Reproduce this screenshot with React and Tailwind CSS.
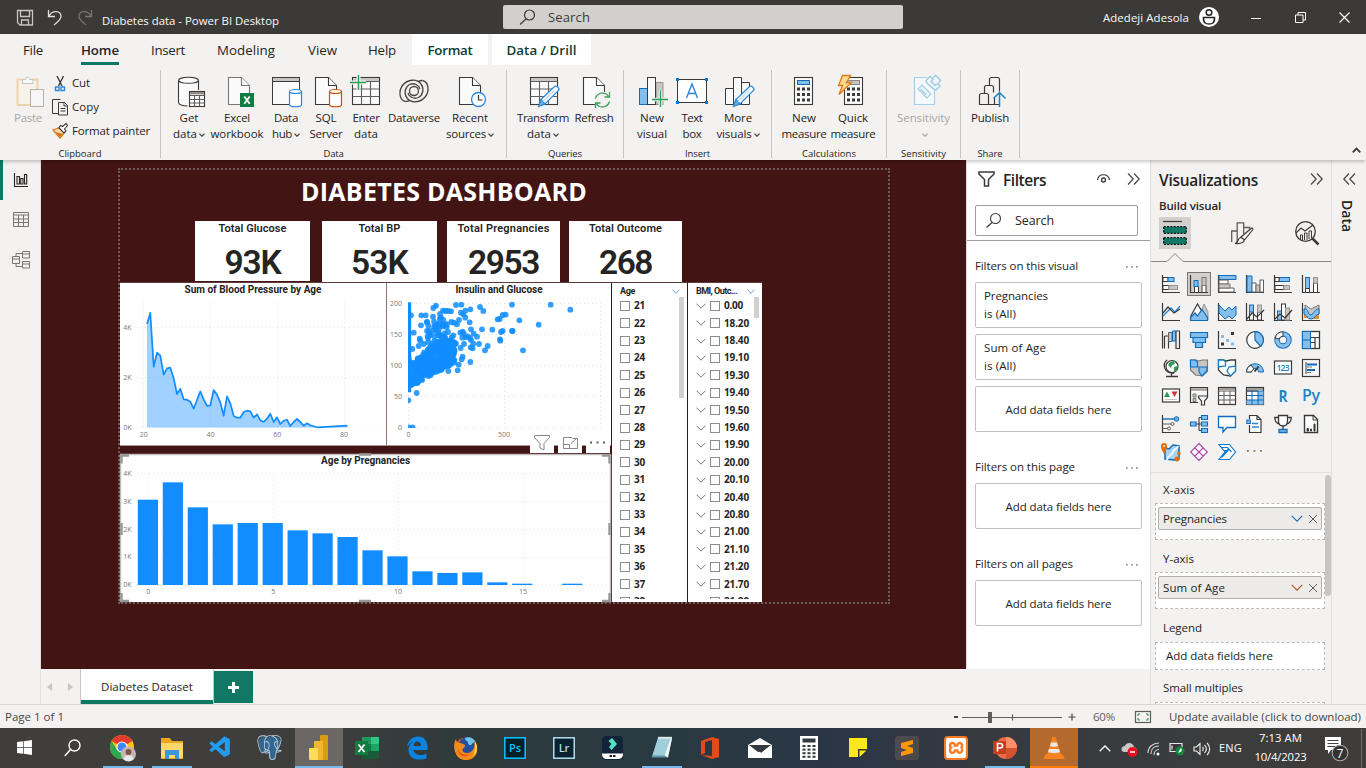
import { useLayoutEffect, useRef, useState } from "react";
import { FaWindows } from "react-icons/fa";
import { SiPostgresql, SiXampp } from "react-icons/si";
import { VscVscode } from "react-icons/vsc";

/* Text run whose tracking is adjusted so that it spans w pixels. */
function T({ w, className = "", children }) {
  const ref = useRef(null);
  const [ls, setLs] = useState(0);
  useLayoutEffect(() => {
    const el = ref.current;
    const natural = el.getBoundingClientRect().width;
    const n = el.textContent.length;
    if (w && n) setLs((w - natural) / n);
  }, []);
  return (
    <span ref={ref} className={"inline-block whitespace-nowrap " + className} style={{ letterSpacing: ls + "px" }}>
      {children}
    </span>
  );
}

function Ic({ x = 0, y = 0, w = 32, h = 32, className = "", children }) {
  return (
    <svg width={w} height={h} viewBox={`${x} ${y} ${w} ${h}`} fill="none" className={"block shrink-0 overflow-visible " + className}>
      {children}
    </svg>
  );
}

const K = "#3b3a39";
const B = "#0f6cbd";
const LB = "#83beec";
const G = "#c8c6c4";

const Doc = ({ x, c = K }) => (
  <g stroke={c} fill="#fafafa" strokeWidth="1.1">
    <path d={`M${x} 77.5h13l8 8v19h-21z`} />
    <path d={`M${x + 13} 77.5v8h8`} />
  </g>
);
const Cyl = ({ x, c }) => (
  <g stroke={c} fill="#fff" strokeWidth="1.2">
    <path d={`M${x} 91.5v13c0 3 12 3 12 0v-13`} />
    <ellipse cx={x + 6} cy="91.5" rx="6" ry="2" />
  </g>
);
const Pencil = ({ x }) => (
  <g strokeWidth="1.2" transform={`translate(${x} 0)`}>
    <path d="M1.5 105.5l1.5-6L16.500 86.500c2-1.500 5.500 1.500 4 4L7 104z" fill="#f3f9fd" stroke="#2b88d8" />
    <path d="M0.500 106.500l2.500-7 4 4.500z" fill="#69afe5" stroke="#2b88d8" />
    <path d="M5 101.500l11-11" stroke="#c7e0f4" />
  </g>
);
const Calc = ({ x, d = LB, ds = B }) => (
  <g>
    <rect x={x} y="77.5" width="18" height="27" fill="#fafafa" stroke={K} strokeWidth="1.1" />
    <rect x={x + 3} y="80.5" width="12" height="4" fill={d} stroke={ds} />
    {[0, 1, 2].map((r) => [0, 1, 2].map((k) => <rect key={r + "-" + k} x={x + 2.500 + k * 5} y={87.500 + r * 5.500} width="3" height="3" fill={K} />))}
  </g>
);
const Grid = ({ x }) => (
  <g stroke={K} strokeWidth="1.1">
    <rect x={x} y="77.5" width="27" height="27" fill="#fafafa" />
    <rect x={x + 0.5} y="78" width="26" height="3.500" fill={G} stroke="none" />
    <path d={`M${x} 81.500h27M${x} 89h27M${x} 96.500h27M${x + 9} 81.500v23M${x + 18} 81.500v23`} stroke="#605e5c" />
  </g>
);

const icons = {
  paste: (
    <g opacity=".75">
      <path d="M23 79.500h-5.500v25.500h14M32 79.500h5.500V89" fill="none" stroke="#edc894" strokeWidth="2" />
      <path d="M19 81h17v8h-6v15H19z" fill="#fbf3e6" />
      <path d="M22.500 83.500v-4h3c0-3 4.500-3 4.500 0h3v4z" fill="#fafafa" stroke="#b3b0ad" />
      <rect x="30.500" y="89.500" width="13" height="17" fill="#f8f8f8" stroke="#a19f9d" />
    </g>
  ),
  get: (
    <g stroke={K} strokeWidth="1.1">
      <path d="M178.500 80.500v22c0 2 4 3.500 9 3.500h11V80.500" fill="#fafafa" stroke="none" />
      <path d="M178.500 80.500v22c0 2 4 3.500 9 3.500M198.500 80.500V90" />
      <ellipse cx="188.500" cy="80.300" rx="10" ry="3" fill="#fafafa" />
      <rect x="189.500" y="91.500" width="15" height="15" fill="#fff" />
      <path d="M190 93.200h14" stroke="#8a8886" strokeWidth="2.200" />
      <path d="M189.500 95.500h15M189.500 99.500h15M189.500 103h15M194.500 95.500v11M199.500 95.500v11" stroke="#605e5c" />
    </g>
  ),
  excel: (
    <g>
      <Doc x={228.5} c="#797775" />
      <rect x="240" y="93" width="14" height="14" fill="#107c41" />
      <path d="M244.300 96.500l5.400 7.200M249.700 96.500l-5.400 7.200" stroke="#fff" strokeWidth="1.900" />
    </g>
  ),
  hub: (
    <g>
      <rect x="272.5" y="77.5" width="27" height="27" fill="#fafafa" stroke={K} />
      <rect x="273" y="78" width="26" height="3" fill={G} />
      <path d="M272.500 81.500h27" stroke={K} />
      <Cyl x={289.5} c="#2b88d8" />
    </g>
  ),
  sql: (
    <g>
      <Doc x={315.5} />
      <Cyl x={329.5} c="#ca5010" />
    </g>
  ),
  enter: (
    <g>
      <Grid x={352.5} />
      <path d="M350 82.500h16M358.500 75v15" stroke="#f3f2f1" strokeWidth="4" />
      <path d="M350 82.500h16M358.500 75v15" stroke="#23a04f" strokeWidth="1.400" />
    </g>
  ),
  dv: (
    <g stroke="#484644" strokeWidth="1.300" fill="none">
      <path d="M405.500 101.500C399 100 398.500 91 402.500 85.500c5-6.500 14.500-7 18.500-1.500 3.500 4.500 2 11-2.500 13.500-4.500 2-9.500-.5-10.500-4.500" />
      <path d="M422.500 80.500C429 82 429.500 91 425.500 96.500c-5 6.500-14.500 7-18.500 1.500-3.500-4.500-2-11 2.500-13.500 4.500-2 9.500.5 10.500 4.500" />
      <path d="M405.500 101.500c2 0 3.500-.5 4.500-1.300M422.500 80.500c-2 0-3.500.5-4.500 1.300" />
      <circle cx="414" cy="91" r="4.500" />
    </g>
  ),
  recent: (
    <g>
      <Doc x={459.5} />
      <circle cx="478.500" cy="99.500" r="7" fill="#f8fbfe" stroke="#2b88d8" strokeWidth="1.300" />
      <path d="M478.500 95v5h4" stroke={K} strokeWidth="1.200" />
    </g>
  ),
  transform: (
    <g>
      <Grid x={530.5} />
      <Pencil x={538} />
    </g>
  ),
  refresh: (
    <g>
      <Doc x={583.5} />
      <circle cx="602.500" cy="100" r="8.500" fill="#f3f2f1" />
      <path d="M595.500 98.500c1.500-6 10-7.500 13-2M609.500 101.500c-1.500 6-10 7.500-13 2M609.500 92v5h-5M595.500 108v-5h5" stroke="#3fa35b" strokeWidth="1.300" />
    </g>
  ),
  newvis: (
    <g>
      <rect x="656" y="82.500" width="7" height="22" fill={G} stroke="#979593" />
      <rect x="639.500" y="88.500" width="8" height="16" fill={LB} stroke={B} />
      <rect x="647.500" y="77.500" width="8" height="27" fill="#fafafa" stroke={K} />
      <path d="M652 99.500h16M660.500 91v16" stroke="#f3f2f1" strokeWidth="3.500" />
      <path d="M652 99.500h16M660.500 91v16" stroke="#23a04f" strokeWidth="1.300" />
    </g>
  ),
  textbox: (
    <g>
      <rect x="677.500" y="79.500" width="29" height="23" fill="#fff" stroke={K} />
      <path d="M676 78h3v3h-3zM705 78h3v3h-3zM676 101h3v3h-3zM705 101h3v3h-3z" fill="#0078d4" />
      <path d="M686.500 98l5.500-14 5.500 14M688.500 93.500h7" stroke="#2b88d8" strokeWidth="1.400" />
    </g>
  ),
  more: (
    <g>
      <path d="M725.500 88.500h8v16h-8zM741.500 82.500h8v22h-8zM733.500 77.500h8v27h-8z" fill="#fafafa" stroke={K} />
      <Pencil x={733} />
    </g>
  ),
  newm: <Calc x={794.5} />,
  quick: (
    <g>
      <Calc x={844.5} d={G} ds="#8a8886" />
      <path d="M842.500 75.500h8l-4 7h5l-12.500 12 3.500-9h-4z" fill="#fcd88e" stroke="#e07b16" strokeWidth="1.300" />
    </g>
  ),
  sens: (
    <g stroke="#a5cfe6" strokeWidth="1.200">
      <path d="M926 77.500h-12.500v27h20V90" fill="#f5f9fc" />
      <path d="M917 89l4-4 9 9-4 4zM919.500 89l5.500 5.500" fill="#eaf5fb" />
      <path d="M925 80.500l4-4 3 3-2 2 4 4 3-1.500 2 2-4 4c-2 0-10-7-10-9.500zM932 78l2.500-2.500 5 5-2.500 2.500" fill="#f3f9fc" strokeWidth="1.600" />
    </g>
  ),
  publish: (
    <g stroke={K} strokeWidth="1.200">
      <path d="M989.500 85.500v-6q0-2 2-2h6q2 0 2 2v12M984.500 93.500v-6q0-2 2-2h5q2 0 2 2v5M979.500 104.500v-9q0-2 2-2h5q2 0 2 2v9zM989 104.500h10M994.500 98v6.500" fill="none" />
      <path d="M999.500 107V92.500M993.500 98.500l6-6 6 6" stroke="#1f83c4" strokeWidth="1.500" />
    </g>
  ),
};

const Chev = ({ c = "#484644" }) => (
  <svg width="6" height="4" viewBox="0 0 6 4" fill="none" className="ml-[2px] mt-[2px] inline-block">
    <path d="M.4 .6L3 3.200 5.600 .6" stroke={c} strokeWidth="1.300" />
  </svg>
);

function Item({ w, c, icon, l1, w1, l2, w2, chev, dim }) {
  return (
    <div className={"flex shrink-0 flex-col items-center pt-[5px] text-[11.5px] leading-4 " + w + (dim ? " text-[#a8a6a4]" : "")}>
      <Ic x={c - 16} y={75}>{icons[icon]}</Ic>
      <T w={w1} className="mt-[3px]">{l1}</T>
      {(l2 || chev) && (
        <div className="flex min-h-4 items-center">
          {l2 && <T w={w2}>{l2}</T>}
          {chev && <Chev c={dim ? "#a8a6a4" : "#484644"} />}
        </div>
      )}
    </div>
  );
}

function Group({ w, pl = "", label, lw, children }) {
  return (
    <div className={"flex h-[88px] shrink-0 flex-col border-r border-[#c8c6c4] " + w}>
      <div className={"flex h-[77px] shrink-0 " + pl}>{children}</div>
      <div className="flex h-[14px] shrink-0 items-center justify-center text-[9.500px] leading-[14px]">
        <T w={lw}>{label}</T>
      </div>
    </div>
  );
}

function TitleBar() {
  return (
    <div className="flex h-[34px] shrink-0 items-center bg-[#3b3a39] text-[#fafafa]">
      <Ic x={17} y={10} w={16} h={16} className="ml-[17px] mt-[2px]">
        <path d="M17.500 10.500h15v14.500h-12.500l-2.500-2.500zM20.500 10.500v6h9v-6M21.500 25v-5h7v5" stroke="#c8c6c4" strokeWidth="1.300" />
      </Ic>
      <Ic x={48} y={10} w={14} h={16} className="ml-[15px] mt-[2px]">
        <path d="M48.500 10v6.500h6.500M49 16c3-6 12-6 12 .5 0 3-3 5-7 8.500" stroke="#e1dfdd" strokeWidth="1.300" />
      </Ic>
      <Ic x={78} y={10} w={14} h={16} className="ml-4 mt-[2px]">
        <path d="M91.500 10v6.500H85M91 16c-3-6-12-6-12 .5 0 3 3 5 7 8.500" stroke="#797775" strokeWidth="1.300" />
      </Ic>
      <div className="ml-[10px] w-[401px] pt-[7px] text-[11.400px] leading-4"><T w={177}>Diabetes data - Power BI Desktop</T></div>
      <div className="flex h-6 w-[400px] items-center rounded-[2px] bg-[#d2d0ce] text-[#3b3a39]">
        <Ic w={17} h={16} className="ml-4">
          <circle cx="10.500" cy="6" r="5" stroke={K} strokeWidth="1.200" />
          <path d="M7 10L1 15.500" stroke={K} strokeWidth="1.200" />
        </Ic>
        <T w={42} className="ml-3 pt-px text-[13px]">Search</T>
      </div>
      <div className="ml-[200px] pt-px text-[11.400px]"><T w={86}>Adedeji Adesola</T></div>
      <Ic w={20} h={20} className="ml-[10px]">
        <circle cx="10" cy="10" r="10" fill="#fff" />
        <circle cx="10" cy="5.500" r="2.800" stroke="#222" strokeWidth="1.500" />
        <path d="M4.500 10.500h11c.5 6-3 6.500-5.500 6.500s-6-.5-5.500-6.500z" stroke="#222" strokeWidth="1.500" />
      </Ic>
      <div className="ml-8 mt-[2px] h-px w-[10px] bg-white" />
      <Ic w={11} h={11} className="ml-[34px] mt-px"><path d="M.5 3h7.500v7.500H.5zM3 3V.5h7.500v7.500H8" stroke="#fff" /></Ic>
      <Ic w={11} h={11} className="ml-[33px] mt-px"><path d="M.5 .5l10 10M10.500 .5l-10 10" stroke="#fff" strokeWidth="1.200" /></Ic>
    </div>
  );
}

function Tabs() {
  return (
    <div className="flex h-8 shrink-0 items-center text-[13.300px]">
      <T w={20} className="ml-[23px] pt-px">File</T>
      <div className="ml-[38px] flex h-full flex-col justify-end">
        <T w={38} className="mb-px font-semibold">Home</T>
        <div className="mb-px h-[3px] bg-[#117865]" />
      </div>
      <T w={34} className="ml-8 pt-px">Insert</T>
      <T w={58} className="ml-8 pt-px">Modeling</T>
      <T w={29} className="ml-[33px] pt-px">View</T>
      <T w={28} className="ml-[31px] pt-px">Help</T>
      <div className="mb-px ml-4 flex h-[31px] w-[76px] items-center justify-center bg-white pt-[2px] font-semibold text-[#0b3b32]"><T w={45}>Format</T></div>
      <div className="mb-px ml-1 flex h-[31px] w-[99px] items-center justify-center bg-white pt-[2px] font-semibold text-[#0b3b32]"><T w={70}>Data / Drill</T></div>
    </div>
  );
}

function Ribbon() {
  return (
    <div className="relative z-10 flex h-[94px] shrink-0 bg-[#f3f2f1] pt-1 shadow-[0_3px_3px_-1px_rgba(0,0,0,0.2)]">
      <Group w="w-[161px]" pl="pl-[8px]" label="Clipboard" lw={43}>
        <Item w="w-10" c={28} icon="paste" l1="Paste" w1={28} dim />
        <div className="ml-[4px] flex flex-col pt-px text-[11.500px] leading-6">
          <div className="flex items-center">
            <Ic x={52} y={74} w={17} h={17}>
              <path d="M57 75l5 10M63.500 75l-5 10" stroke={K} strokeWidth="1.400" />
              <path d="M55.500 86h3.500v3.500h-3.500zM61 86h3.500v3.500H61z" stroke="#2b88d8" strokeWidth="1.400" />
            </Ic>
            <T w={18} className="ml-[3px]">Cut</T>
          </div>
          <div className="flex items-center">
            <Ic x={52} y={98} w={17} h={17}>
              <path d="M58 112.500h-5.500v-14h8M58.500 101.500h6l3 3v9.500h-9z M64 101.500v3.500h3.500M60.500 107.500h5M60.500 110h5" stroke={K} />
            </Ic>
            <T w={27} className="ml-[3px]">Copy</T>
          </div>
          <div className="flex items-center">
            <Ic x={52} y={122} w={17} h={17}>
              <path d="M53 129l8-3 4 5-5 6z" fill="#fbd9a5" stroke="#d9730d" strokeWidth="1.200" />
              <path d="M55 131l5 5 3-3" fill="#d9730d" />
              <path d="M59 127l5 5 2-2-1.500-2 3-3.500-1.500-2-3.500 3-2-1z" fill="#fff" stroke={K} strokeWidth="1.100" />
            </Ic>
            <T w={78} className="ml-[3px]">Format painter</T>
          </div>
        </div>
      </Group>
      <Group w="w-[346px]" pl="pl-[9px]" label="Data" lw={20}>
        <Item w="w-[38px]" c={189} icon="get" l1="Get" w1={19} l2="data" w2={24} chev />
        <Item w="w-[58px]" c={237} icon="excel" l1="Excel" w1={26} l2="workbook" w2={53} />
        <Item w="w-10" c={286} icon="hub" l1="Data" w1={24} l2="hub" w2={20} chev />
        <Item w="w-10" c={326} icon="sql" l1="SQL" w1={21} l2="Server" w2={33} />
        <Item w="w-10" c={366} icon="enter" l1="Enter" w1={27} l2="data" w2={24} />
        <Item w="w-14" c={414} icon="dv" l1="Dataverse" w1={52} />
        <Item w="w-14" c={470} icon="recent" l1="Recent" w1={36} l2="sources" w2={40} chev />
      </Group>
      <Group w="w-[117px]" pl="pl-[7px]" label="Queries" lw={34}>
        <Item w="w-[58px]" c={543} icon="transform" l1="Transform" w1={52} l2="data" w2={24} chev />
        <Item w="w-11" c={594} icon="refresh" l1="Refresh" w1={39} />
      </Group>
      <Group w="w-[148px]" pl="pl-[8px]" label="Insert" lw={25}>
        <Item w="w-10" c={652} icon="newvis" l1="New" w1={24} l2="visual" w2={30} />
        <Item w="w-10" c={692} icon="textbox" l1="Text" w1={21} l2="box" w2={19} />
        <Item w="w-[52px]" c={738} icon="more" l1="More" w1={28} l2="visuals" w2={35} chev />
      </Group>
      <Group w="w-[115px]" pl="pl-[7px]" label="Calculations" lw={54}>
        <Item w="w-[50px]" c={804} icon="newm" l1="New" w1={24} l2="measure" w2={45} />
        <Item w="w-12" c={853} icon="quick" l1="Quick" w1={30} l2="measure" w2={45} />
      </Group>
      <Group w="w-[74px]" pl="justify-center" label="Sensitivity" lw={45}>
        <Item w="w-[60px]" c={923} icon="sens" l1="Sensitivity" w1={53} chev dim />
      </Group>
      <Group w="w-[59px]" pl="justify-center" label="Share" lw={25}>
        <Item w="w-[50px]" c={990} icon="publish" l1="Publish" w1={38} />
      </Group>
      <div className="flex grow items-end justify-end pb-[7px] pr-[5px]">
        <Ic w={9} h={6}><path d="M.7 5.300L4.500 1.500l3.800 3.800" stroke={K} strokeWidth="1.800" /></Ic>
      </div>
    </div>
  );
}

function Rail() {
  return (
    <div className="flex w-[41px] shrink-0 flex-col border-r border-[#e1dfdd]">
      <div className="flex h-10 items-center border-l-[3px] border-[#117865] pl-[11px]">
        <Ic x={14} y={173} w={14} h={15}>
          <path d="M14.500 173v13.500h13.500M17 176.500h2.500v7.500H17zM20.800 178.500h2.200v5.500h-2.200zM24.500 174.500h2.200v9.500h-2.200z" stroke="#252423" strokeWidth="1.100" />
        </Ic>
      </div>
      <div className="flex h-[39px] items-center pl-[13px]">
        <Ic w={16} h={15}><path d="M.5 .5h15v14H.5zM.5 3h15M.5 7h15M.5 10.500h15M5.500 3v11.500M10.500 3v11.500" stroke="#797775" /></Ic>
      </div>
      <div className="flex h-[41px] items-center pl-3">
        <Ic w={18} h={18}><path d="M.5 5.500h7v7h-7zM.5 8h7M10.500 .5h7v6.500h-7zM10.500 3h7M10.500 10.500h7v6.500h-7zM10.500 13h7M4 5.500V2.500h6.500M4 12.500v3h6.500" stroke="#797775" /></Ic>
      </div>
    </div>
  );
}

const areaY = [492, 458, 620, 578, 587, 644, 625, 623, 655, 702, 686, 718, 719, 725, 746, 720, 694, 718, 738, 736, 690, 704, 727, 767, 709, 730, 768, 773, 773, 756, 752, 754, 773, 763, 781, 786, 776, 761, 786, 772, 792, 782, 779, 798, 786, 777, 786, 797, 790, 796, 799, 802];
const areaPts = areaY.map((v, i) => [(441 + i * 10) / 3, 160 + v / 3]).concat([[347.5, 425.7]]);
const areaLine = areaPts.map((p) => p[0].toFixed(1) + "," + p[1].toFixed(1)).join(" ");

const Axis = ({ x, y, children, a = "middle", w }) => (
  <text x={x} y={y} textAnchor={a} fontSize="7" fill="#777" fontFamily="Open Sans" textLength={w}>{children}</text>
);

const gridStroke = { stroke: "#e3e3e3", strokeDasharray: "1 3", strokeWidth: 1 };

function AreaChart() {
  return (
    <Ic x={120} y={283} w={266} h={162}>
      <g {...gridStroke}><path d="M137 327.500h246M137 377.500h246M137 427.500h246M143.500 302v126M210.500 302v126M277.500 302v126M344.500 302v126" /></g>
      <polygon points={`147,427.600 ${areaLine} 347.500,427.600`} fill="#118dff" fillOpacity=".4" />
      <polyline points={areaLine} stroke="#118dff" strokeWidth="1.700" strokeLinejoin="round" />
      <Axis x={131.5} y={330} a="end">4K</Axis>
      <Axis x={131.5} y={380} a="end">2K</Axis>
      <Axis x={131.5} y={430} a="end">0K</Axis>
      {[20, 40, 60, 80].map((v, i) => <Axis key={v} x={143.7 + i * 66.8} y={437}>{v}</Axis>)}
    </Ic>
  );
}

/* Sparse points, three units per pixel, measured from (380, 270). */
const sparse = [[168, 107], [160, 114], [228, 105], [244, 104], [300, 111], [310, 123], [271, 118], [256, 122], [250, 133], [256, 143], [243, 128], [396, 104], [512, 104], [571, 119], [418, 151], [476, 164], [429, 241], [377, 134], [368, 135], [353, 148], [359, 147], [337, 179], [306, 178], [368, 183], [363, 186], [396, 183], [398, 183], [360, 208], [361, 212], [291, 200], [297, 222], [323, 228], [315, 241], [271, 276], [273, 178], [269, 157], [281, 191], [270, 204], [273, 210], [257, 202], [248, 185], [241, 188], [237, 150], [231, 163], [214, 156], [222, 158], [213, 124], [189, 122], [197, 123], [204, 123], [180, 132], [159, 140], [124, 136], [137, 136], [123, 166], [93, 136], [101, 188], [119, 206], [97, 237], [272, 232], [278, 235], [252, 222], [228, 221], [242, 234], [248, 260], [245, 268], [236, 284], [233, 301], [205, 303], [208, 286], [110, 369], [85, 391], [86, 472], [98, 472], [93, 346], [251, 190], [247, 203], [263, 199], [215, 202], [220, 196], [162, 155], [145, 167], [183, 142], [190, 150], [177, 160], [188, 165], [162, 171], [141, 183], [150, 192], [176, 187], [204, 186], [200, 172], [168, 180], [143, 199], [163, 198], [184, 200], [195, 210], [121, 212], [131, 222], [210, 212], [280, 221], [116, 228]];
const dense = (() => {
  const out = [];
  let s = 7;
  const rnd = () => (s = (s * 16807) % 2147483647) / 2147483647;
  while (out.length < 330) {
    const x = 94 + rnd() * 130;
    const y = 212 + rnd() * 138;
    const lower = 350 - (x - 92) * 0.55;
    const upper = 285 - (x - 92) * 0.95;
    if (y < lower && y > upper) out.push([x, y]);
  }
  while (out.length < 360) {
    const x = 140 + rnd() * 62;
    const y = 145 + rnd() * 85;
    out.push([x, y]);
  }
  return out;
})();

function Scatter() {
  return (
    <Ic x={387} y={283} w={224} h={162}>
      <clipPath id="plot"><path d="M408 300h200v128H408z" /></clipPath>
      <g {...gridStroke}><path d="M408 303.500h193M408 334.500h193M408 365.500h193M408 396.500h193M408 427.500h193M408.500 303v125M504.500 303v125M600.500 303v125" /></g>
      <g clipPath="url(#plot)">
        <rect x="408" y="302.300" width="3.200" height="90" fill="#118dff" />
        <g fill="#118dff" fillOpacity=".85">
          <path d="M409 330c3 6 1 10 0 16s6 12 1 22 4 18-1 24z" />
          {sparse.concat(dense).map((p, i) => <circle key={i} cx={380 + p[0] / 3} cy={270 + p[1] / 3} r="2.900" />)}
        </g>
      </g>
      {[200, 150, 100, 50, 0].map((v, i) => <Axis key={v} x={402} y={305.5 + i * 31.1} a="end">{v}</Axis>)}
      <Axis x={408.5} y={437}>0</Axis>
      <Axis x={504} y={437}>500</Axis>
    </Ic>
  );
}

const barTops = [179, 127, 202, 253, 249, 249, 271, 280, 291, 331, 349, 394, 399, 397, 427, 431, null, 431];

function BarChart() {
  return (
    <Ic x={120} y={454} w={491} h={148}>
      <g {...gridStroke}><path d="M137 473.500h470M137 501.500h470M137 529.500h470M137 557.500h470M137 585.500h470M148.500 473v112M273.500 473v112M398.500 473v112M523.500 473v112" /></g>
      {barTops.map((t, i) => t && <rect key={i} x={137.8 + i * 24.96} y={440 + t / 3} width="20.200" height={145 - t / 3} fill="#118dff" />)}
      {["4K", "3K", "2K", "1K", "0K"].map((v, i) => <Axis key={v} x={131.5} y={476 + i * 27.8} a="end">{v}</Axis>)}
      {[0, 5, 10, 15].map((v, i) => <Axis key={v} x={148.3 + i * 124.9} y={594}>{v}</Axis>)}
      <path d="M120.500 454v148M120 454.500h491M610.500 454v148" stroke="#c0bebc" strokeWidth="1.500" />
      <path d="M129 455.500h-7.500v8M121.500 593v8h7.500M602 455.500h7.500v8M609.500 593v8H602M359 454.500h12M359 601h12M121.500 523v12M609.500 523v12" stroke="#979797" strokeWidth="2.400" />
    </Ic>
  );
}

function Card({ className, label, lw, value, vw }) {
  return (
    <div className={"absolute flex flex-col items-center bg-white font-['Roboto'] text-[#252423] " + className}>
      <T w={lw} className="mt-[1px] text-[11px] font-semibold leading-[14px]">{label}</T>
      <T w={vw} className="mt-[9px] text-[33.500px] font-semibold leading-[36px]">{value}</T>
    </div>
  );
}

function ChartTitle({ w, children }) {
  return (
    <div className="pointer-events-none absolute inset-x-0 top-0 flex justify-center font-['Roboto'] text-[10px] font-bold leading-[14px] text-[#252423]">
      <T w={w}>{children}</T>
    </div>
  );
}

const Check = () => <span className="box-border h-[10px] w-[10px] shrink-0 border border-[#8f8d8b] bg-white" />;
const Down = ({ c = "#797775", w = 10, h = 6 }) => (
  <svg width={w} height={h} viewBox="0 0 10 6" fill="none" className="block shrink-0"><path d="M.5 .7L5 5.200 9.500 .7" stroke={c} strokeWidth="1" /></svg>
);

const ages = ["21", "22", "23", "24", "25", "26", "27", "28", "29", "30", "31", "32", "33", "34", "35", "36", "37", "38"];
const bmis = ["0.00", "18.20", "18.40", "19.10", "19.30", "19.40", "19.50", "19.60", "19.90", "20.00", "20.10", "20.40", "20.80", "21.00", "21.10", "21.20", "21.70", "21.80"];

function Slicer({ className, title, tw, rows, expand }) {
  return (
    <div className={"absolute flex h-[319px] flex-col bg-white " + className}>
      <div className="flex h-[14px] shrink-0 items-center justify-between pl-2 pr-[7px] pt-[3px] font-['Roboto'] text-[9px] font-bold text-[#252423]">
        <T w={tw}>{title}</T>
        <Down c="#3a86c8" w={8} h={5} />
      </div>
      <div className="flex h-[302px] justify-between overflow-hidden">
        <div className="flex flex-col pl-2">
          {rows.map((r) => (
            <div key={r} className="flex h-[17.410px] shrink-0 items-center gap-[4px] text-[10px] font-bold text-[#252423]">
              {expand && <Down />}
              <Check />
              <T w={r.length === 2 ? 11 : r.length === 4 ? 19 : 25}>{r}</T>
            </div>
          ))}
        </div>
        <div className={"mr-[3px] w-[5px] shrink-0 bg-[#d2d0ce] " + (expand ? "h-[21px]" : "h-[101px]")} />
      </div>
    </div>
  );
}

function Canvas() {
  return (
    <div className="relative h-[509px] w-[925px] shrink-0 overflow-hidden bg-[#431414]">
      <div className="absolute left-[77px] top-[8px] h-[436px] w-[772px] border-2 border-dotted border-[#6e5d5b]" />
      <div className="absolute left-[260px] top-[14px] text-[25px] font-bold leading-[34px] text-white"><T w={286}>DIABETES DASHBOARD</T></div>
      <Card className="left-[154px] top-[61px] h-[60px] w-[115px]" label="Total Glucose" lw={68} value="93K" vw={56} />
      <Card className="left-[281px] top-[61px] h-[61px] w-[115px]" label="Total BP" lw={42} value="53K" vw={57} />
      <Card className="left-[406px] top-[61px] h-[61px] w-[113px]" label="Total Pregnancies" lw={92} value="2953" vw={71} />
      <Card className="left-[528px] top-[61px] h-[61px] w-[113px]" label="Total Outcome" lw={73} value="268" vw={53} />
      <div className="absolute left-[79px] top-[122px] h-px w-[642px] bg-[#5e3a3a]" />
      <div className="absolute left-[79px] top-[123px] h-[162px] w-[266px] bg-white">
        <AreaChart />
        <ChartTitle w={137}>Sum of Blood Pressure by Age</ChartTitle>
      </div>
      <div className="absolute left-[345px] top-[123px] h-[162px] w-px bg-[#8e7372]" />
      <div className="absolute left-[346px] top-[123px] h-[162px] w-[224px] bg-white">
        <Scatter />
        <ChartTitle w={87}>Insulin and Glucose</ChartTitle>
      </div>
      <div className="absolute left-[79px] top-[285px] h-px w-[491px] bg-[#a99695]" />
      <div className="absolute left-[489px] top-[272px] flex gap-1">
        <div className="flex h-[21px] w-6 items-center justify-center bg-white">
          <Ic w={16} h={15}><path d="M.5 .5h15v2L10 8.500v6.500l-4-2v-4.500L.5 2.500z" stroke="#8a8886" /></Ic>
        </div>
        <div className="flex h-[21px] w-6 items-center justify-center bg-white">
          <Ic w={15} h={12}><path d="M9 .5H.5v11h14V6M.5 7.500h6v4M8 6.500l5.500-5M9.500 1.500h5v4" stroke="#8a8886" /></Ic>
        </div>
        <div className="flex h-[21px] w-6 items-center justify-center bg-white pb-px">
          <Ic w={16} h={3}><path d="M0 .5h2v2H0zM6.500 .5h2v2h-2zM13 .5h2v2h-2z" fill="#605e5c" /></Ic>
        </div>
      </div>
      <div className="absolute left-[79px] top-[294px] h-[148px] w-[491px] bg-white">
        <BarChart />
        <ChartTitle w={89}>Age by Pregnancies</ChartTitle>
      </div>
      <Slicer className="left-[571px] top-[123px] w-[75px]" title="Age" tw={15} rows={ages} />
      <Slicer className="left-[647px] top-[123px] w-[74px]" title="BMI, Outc..." tw={41} rows={bmis} expand />
    </div>
  );
}

const Dots = () => <Ic w={12} h={3}><path d="M0 1h1.700v1.700H0zM5 1h1.700v1.700H5zM10 1h1.700v1.700H10z" fill="#979593" /></Ic>;
const Arrows = ({ left }) => (
  <Ic w={13} h={12}>
    <path d={left ? "M6 .5L.8 6 6 11.500M12 .5L6.800 6l5.200 5.500" : "M1 .5L6.200 6 1 11.500M7 .5l5.200 5.500L7 11.500"} stroke="#484644" strokeWidth="1.200" />
  </Ic>
);

function FilterSection({ label, lw, className = "" }) {
  return (
    <div className={"flex h-8 items-center justify-between pr-1 text-[11.500px] " + className}>
      <T w={lw}>{label}</T>
      <Dots />
    </div>
  );
}
const cardCls = "flex h-[46px] shrink-0 rounded-[2px] border border-[#c2c0be] bg-white text-[11.500px] ";
const AddCard = () => <div className={cardCls + "items-center justify-center pt-[2px]"}><T w={106}>Add data fields here</T></div>;

function Filters() {
  return (
    <div className="flex h-[509px] w-[184px] shrink-0 flex-col border-l border-[#e1dfdd] bg-white">
      <div className="flex h-[81px] shrink-0 flex-col border-b border-[#a19f9d] pl-2 pr-3">
        <div className="flex h-[38px] items-center pl-[3px]">
          <Ic w={17} h={16}><path d="M1 1h15v2L10.500 8.500v6.500h-4V8.500L1 3z" stroke={K} strokeWidth="1.500" /></Ic>
          <T w={43} className="ml-[8px] pt-[1px] text-[15.500px] font-semibold leading-[20px]">Filters</T>
          <Ic w={13} h={10} className="ml-[51px]"><path d="M.5 6c1-7 11-7 12 0" stroke={K} strokeWidth="1.200" /><circle cx="6.500" cy="6" r="2" stroke={K} strokeWidth="1.300" /></Ic>
          <div className="ml-[17px]"><Arrows /></div>
        </div>
        <div className="mt-[7px] flex h-[31px] items-center rounded-[2px] border border-[#a19f9d]">
          <Ic w={15} h={15} className="ml-[10px]"><circle cx="9.500" cy="5.500" r="5" stroke={K} strokeWidth="1.100" /><path d="M6 9.500L.5 14.500" stroke={K} strokeWidth="1.200" /></Ic>
          <T w={39} className="ml-[14px] pt-px text-[12.500px]">Search</T>
        </div>
      </div>
      <div className="flex flex-col pl-2 pr-2">
        <FilterSection label="Filters on this visual" lw={103} className="mt-[9px]" />
        <div className="flex flex-col gap-[6px]">
          <div className={cardCls + "flex-col items-start pl-2 pt-[4px] leading-[18px]"}><T w={64}>Pregnancies</T><T w={32}>is (All)</T></div>
          <div className={cardCls + "flex-col items-start pl-2 pt-[4px] leading-[18px]"}><T w={62}>Sum of Age</T><T w={32}>is (All)</T></div>
          <AddCard />
        </div>
        <FilterSection label="Filters on this page" lw={100} className="mt-[19px]" />
        <AddCard />
        <FilterSection label="Filters on all pages" lw={98} className="mt-[19px]" />
        <AddCard />
      </div>
    </div>
  );
}

const ax = <path d="M.5 0v17.500H18" stroke={K} strokeWidth="1.200" />;
const tbl = (
  <g>
    <rect x=".5" y=".5" width="17" height="17" fill="#fafafa" stroke={K} strokeWidth="1.200" />
    <path d="M1 2h16" stroke="#a19f9d" strokeWidth="2" />
  </g>
);
const vizIcons = [
  <g>{ax}<path d="M1 2.500h5v4H1zM1 10.500h6v4H1z" stroke={K} fill="#fff" /><rect x="6" y="2.500" width="6" height="4" fill={LB} stroke={B} /><rect x="7" y="10.500" width="8.500" height="4" fill={G} stroke="#979593" /></g>,
  <g>{ax}<path d="M4.500 11.500h4v6h-4zM12 10.500h4v7h-4z" stroke={K} fill="#fff" /><rect x="4" y="5.500" width="4" height="6" fill={LB} stroke={B} /><rect x="12" y="2.500" width="4" height="8" fill={G} stroke="#797775" /></g>,
  <g>{ax}<path d="M1 .5h17v4H1z" fill={LB} stroke={B} /><path d="M1 5h9v4H1zM1 13h15v4H1z" fill="#fff" stroke="#605e5c" /><path d="M1 9h11v4H1z" fill={G} stroke="#797775" /></g>,
  <g>{ax}<path d="M1 1h5v16H1z" fill={LB} stroke={B} /><path d="M6 8h4v9H6z" fill="#fff" stroke="#605e5c" /><path d="M10 10h4v7h-4z" fill={G} stroke="#797775" /><path d="M14 5h3.500v12H14z" fill="#fff" stroke="#605e5c" /></g>,
  <g>{ax}<rect x="5" y="2.500" width="10.500" height="4" fill={LB} stroke={B} /><path d="M1 2.500h4v4H1zM1 10.500h9v4H1z" fill="#fff" stroke={K} /><rect x="10" y="10.500" width="5.500" height="4" fill={G} stroke="#979593" /></g>,
  <g>{ax}<rect x="3.500" y="2.500" width="4" height="11" fill={LB} stroke={B} /><path d="M3.500 13.500h4v4h-4zM11.500 8h4v9.500h-4z" fill="#fff" stroke={K} /><rect x="11.500" y="2.500" width="4" height="5.500" fill={G} stroke="#979593" /></g>,

  <g>{ax}<path d="M1 13l8-8 4 4 5-6" stroke="#2b88d8" strokeWidth="1.300" /><path d="M1 10l5-6 6 6 6-4" stroke={K} strokeWidth="1.200" /></g>,
  <g><path d="M8 17l6-16 4 8v8z" fill={G} stroke="#979593" /><path d="M.5 13.500l7-12.500 6 10-6 6.500" fill="#fafafa" stroke={K} strokeWidth="1.200" /><path d="M.5 17.500v-3L5 10l2.500 3L12 6.500l5.500 8v3z" fill={LB} stroke={B} strokeWidth="1.200" /></g>,
  <g>{ax}<path d="M1 2l6 6 4-4 3 3 4-4v9l-4 4-3-3-4 3-6-6z" fill={LB} stroke={B} /></g>,
  <g>{ax}<path d="M3.500 8h4v9h-4zM11.500 9h4v8h-4z" fill="#fff" stroke={K} /><rect x="3.500" y="2" width="4" height="7" fill={LB} stroke={B} /><rect x="11.500" y="2" width="4" height="7" fill={G} stroke="#979593" /><path d="M1 16l5-6 5 4 7-7" stroke={K} strokeWidth="1.300" /></g>,
  <g>{ax}<rect x="3.500" y="8" width="4" height="9" fill={LB} stroke={B} /><rect x="7.500" y="1" width="4" height="16" fill="#fff" stroke={K} /><rect x="11.500" y="5" width="4" height="12" fill={G} stroke="#979593" /><path d="M1 16l5-5 5 4 7-8" stroke={K} strokeWidth="1.300" /></g>,
  <g><path d="M3 2l6 4 8-4v9l-8 4-6-4z" fill={G} stroke="#797775" /><path d="M2 10h4v5H2zM11 11h6v5h-6z" fill="#f28c28" /><path d="M2 6c4-2 4 7 7 6s4-7 8-6v5c-3 0-4 5-8 5s-4-4-7-5z" fill={LB} stroke={B} />{ax}</g>,

  <g><path d="M.5 0v17.500M2.500 5h4v12.500M2.500 5v12.500M14 0h3.500v17.500H14z" stroke={K} strokeWidth="1.200" /><path d="M6.500 1.500h3.500v9H6.500z" fill={G} stroke="#605e5c" /><path d="M10.500 0h3v10h-3z" fill={LB} stroke={B} /></g>,
  <g fill={LB} stroke={B} strokeWidth="1.200"><path d="M.5 1.500h17v5H.5zM3 6.500h12.500v5H3zM5.500 11.500h7v5h-7z" /></g>,
  <g><path d="M.5 0v17.500H18" stroke={K} strokeWidth="1.200" /><path d="M13 1h3v3h-3zM3 11.500h3v3H3z" fill={K} /><path d="M3 4h3v3H3zM8 8h3v3H8zM13 11.500h3v3h-3z" fill={LB} /></g>,
  <g><circle cx="9" cy="9" r="8.300" fill="#fafafa" stroke={K} strokeWidth="1.200" /><path d="M9 .7A8.300 8.300 0 0 1 14.500 15.200L9 9z" fill={LB} stroke={B} strokeWidth="1.200" /></g>,
  <g><circle cx="9" cy="9" r="6" stroke={B} strokeWidth="5.500" /><circle cx="9" cy="9" r="6" stroke={LB} strokeWidth="3.600" /><path d="M1.200 7A8 8 0 0 1 9 .8v4.400A4 4 0 0 0 5.200 8z" fill="#fafafa" stroke={K} /></g>,
  <g><rect x=".5" y=".5" width="17" height="17" fill="#fafafa" stroke={K} strokeWidth="1.300" /><path d="M.5 .5h8v17h-8z" fill={LB} stroke={B} /><path d="M.5 9h8" stroke={B} /><path d="M8.500 6.500h9M13 6.500v11M8.500 11.500H13" stroke={K} strokeWidth="1.200" /></g>,

  <g><circle cx="10" cy="7.500" r="6" fill="#fff" stroke={K} strokeWidth="1.200" /><path d="M8 3l4-1 1 3-3 1-1 3-3-3zM12 8l4-1-1 5-3 1z" fill="#2c9a53" /><path d="M5 1c-5 4-3 14 7 13M9.500 14v3.500M4 17.500h12" stroke={K} strokeWidth="1.300" /></g>,
  <g strokeWidth="1.100"><path d="M.5 1h5l3 1 4-1h5v11l-5 5-7-1-5-5z" fill={G} stroke="#797775" /><path d="M.5 1h5l2 2v5L.5 8zM9 8h8v4l-5 5-3-4z" fill={LB} stroke={B} /></g>,
  <g strokeWidth="1.300"><path d="M.5 1h5l3 1 4-1h5v11l-5 5-7-1-5-5z" fill="#fff" stroke={K} /><path d="M.5 1h5l2 2v4L.5 8zM9 12l2-4 6.500-1v5l-5 5z" fill="#fff" stroke="#1f83c4" /></g>,
  <g><path d="M.5 13C1 2 17 2 17.500 13h-5c-.5-5-6.500-5-7 0z" fill={LB} stroke={B} /><path d="M.5 13c0-3 2-6 4.500-7l3 4c-1 0-2 1.500-2.500 3z" fill="#fafafa" stroke={K} /><path d="M8.500 12.500l4-5" stroke={K} strokeWidth="2" /></g>,
  <g><rect x=".5" y="2" width="17" height="13" fill="#fff" stroke={K} strokeWidth="1.200" /><text x="9" y="11.800" textAnchor="middle" fontSize="8.500" fontWeight="600" fill="#1f83c4" textLength="13" fontFamily="Open Sans">123</text></g>,
  <g><rect x=".5" y=".5" width="17" height="17" fill="#fafafa" stroke={K} strokeWidth="1.200" /><path d="M4 3v12" stroke={K} /><path d="M5 5.500h10M5 11h8" stroke={B} strokeWidth="1.800" /><path d="M5 8h5M5 13.500h4" stroke="#797775" /></g>,

  <g><rect x=".5" y="2" width="17" height="13" fill="#fff" stroke={K} strokeWidth="1.200" /><path d="M2 10l3-5.500L8 10z" fill="#2c9a53" /><path d="M9.500 4.500h6l-3 5.500z" fill="#e02c2c" /><path d="M3 12.500h12" stroke={G} /></g>,
  <g><path d="M8 15.500H.5V.5h17V9" fill="#fafafa" stroke={K} strokeWidth="1.200" /><path d="M1 2.500h16" stroke="#a19f9d" strokeWidth="2.500" /><path d="M3 7h3v3H3zM3 11.500h3v3H3z" fill={G} stroke="#797775" /><path d="M8.500 9h9v1.500L14.500 14v4h-3v-4l-3-3.500z" fill="#fff" stroke={K} strokeWidth="1.200" /></g>,
  <g>{tbl}<path d="M.5 4h17M.5 8.500h17M.5 13h17M6 4v13.500M12 4v13.500" stroke="#605e5c" /></g>,
  <g>{tbl}<path d="M12 4h5.500v13.500H.5V13H12z" fill={LB} /><path d="M.5 4h17M.5 8.500h17M.5 13h17M6 4v13.500M12 4v13.500" stroke={B} /><path d="M.5 13V4H12" stroke={K} /></g>,
  <text x="9" y="15" textAnchor="middle" fontSize="16" fontWeight="700" fill="#1f83c4" fontFamily="Open Sans" textLength="9" lengthAdjust="spacingAndGlyphs">R</text>,
  <text x="9" y="14" textAnchor="middle" fontSize="16" fontWeight="600" fill="#1f83c4" fontFamily="Open Sans" textLength="18">Py</text>,

  <g>{ax}<path d="M1 4h12M1 9h8M1 13.500h5" stroke="#605e5c" /><path d="M1 4h12" stroke="#2b88d8" strokeWidth="1.300" /><circle cx="14.500" cy="4" r="2.300" fill="#69afe5" stroke={B} /><circle cx="10.500" cy="9" r="1.500" stroke="#605e5c" /><circle cx="7" cy="13.500" r="1.500" stroke="#605e5c" /></g>,
  <g fill={LB} stroke={B} strokeWidth="1.100"><path d="M6 9h5M9 2.500v13M9 2.500h2M9 15.500h2" fill="none" stroke={K} /><path d="M.5 7h5.500v4H.5zM11.500 .5h6v4h-6zM11.500 7h6v4h-6zM11.500 13.500h6v4h-6z" /></g>,
  <path d="M.5 1.500h17v11H9l-4 4.500v-4.500H.5z" fill="#fff" stroke={B} strokeWidth="1.300" />,
  <g><path d="M3.500 4V.5H11l4 4v13H3.500V10M11 .5v4h4" fill="#fafafa" stroke={K} strokeWidth="1.200" /><rect x=".8" y="5" width="3.500" height="3.500" fill={LB} stroke={B} /><path d="M6 8.500h6M6 12h7" stroke="#2b88d8" strokeWidth="1.300" /></g>,
  <g strokeWidth="1.300"><path d="M4.500 .5h9v6c0 6-9 6-9 0zM4.500 2.500H.8c0 4 1.500 6 5 6.500M13.500 2.500h3.700c0 4-1.500 6-5 6.500M9 11v4" stroke={K} fill="#fafafa" /><path d="M5 17.500h8v-3H5z" fill={LB} stroke={B} /></g>,
  <g><path d="M2.500 .5h9l4 4v13h-13z" fill="#fff" stroke={K} strokeWidth="1.400" /><path d="M11 .5v4.500h4.500" stroke={K} /><path d="M5 16v-2.500h1.500V16zM8.500 16v-2h1v2zM12 16V9h1v7z" fill={K} stroke={K} /></g>,

  <g><path d="M3 5l4 1 4-4 6 1v13l-5 1-9-1z" fill="#a8d3f2" stroke={B} strokeWidth="1.500" /><path d="M5 17c1-6 5-4 6-8s4-2 5-6" fill="none" stroke="#f3f9fd" strokeWidth="2" /><path d="M-1 3a3 3 0 0 1 6 0c0 3-1 4-3 8-2-4-3-5-3-8z" fill="#e36c09" /><circle cx="2" cy="3" r="1" fill="#fff" /><circle cx="15" cy="16" r="2.500" fill="#e36c09" /><circle cx="17" cy="10.500" r="1.700" fill="#e36c09" /></g>,
  <g stroke="#a349a4" strokeWidth="1.100" fill="#fdf7fd"><path d="M9 .5l4.200 4.300L9 9 4.800 4.800zM9 9l4.200 4.200L9 17.500l-4.200-4.300zM4.800 4.800L9 9l-4.200 4.200L.6 9zM13.200 4.800L17.400 9l-4.200 4.200L9 9z" /></g>,
  <g stroke="#0f78d4" strokeWidth="1.200"><path d="M1 1.500h10.500L17.500 9l-6 7.500H1L7 9z" fill="#fff" /><path d="M3.500 4.500h6L13.500 9M6 7.500h3M5 12l6-6.500M3.500 14.500l7-7.500" /></g>,
  <path d="M1 7h1.800v1.800H1zM7.500 7h1.800v1.800H7.500zM14 7h1.800v1.800H14z" fill="#8a7456" />,
];

function Well({ label, lw, pill, pw, chev }) {
  return (
    <div className="flex shrink-0 flex-col pb-[2px]">
      <T w={lw} className="ml-2 mt-[6px] h-[24px] self-start text-[11.500px] leading-[22px]">{label}</T>
      <div className="h-[37px] border border-dashed border-[#bebbb8] bg-white px-[2px] pt-[3px]">
        <div className="flex h-[23px] items-center rounded-[2px] border border-[#b3b0ad] bg-[#edebe9] pl-1 pr-1 text-[11.500px]">
          <T w={pw}>{pill}</T>
          <div className="grow" />
          <Down c={chev} w={12} h={7} />
          <Ic w={8} h={8} className="ml-[6px]"><path d="M0 0l8 8M8 0L0 8" stroke="#605e5c" /></Ic>
        </div>
      </div>
    </div>
  );
}

function Viz() {
  return (
    <div className="flex h-[544px] w-[182px] shrink-0 flex-col overflow-hidden border-x border-[#e1dfdd]">
      <div className="flex h-[38px] shrink-0 items-center justify-between pl-2 pr-2">
        <T w={99} className="pt-[1px] text-[15.500px] font-semibold leading-[20px]">Visualizations</T>
        <Arrows />
      </div>
      <T w={62} className="ml-2 h-[19px] shrink-0 self-start text-[11.500px] font-semibold leading-[15px]">Build visual</T>
      <div className="flex shrink-0 items-center pl-2">
        <div className="flex h-8 w-8 items-center justify-center bg-[#d2d0ce]">
          <Ic w={24} h={24}>
            <path d="M0 .5h19" stroke={K} strokeWidth="1.200" />
            <path d="M.7 5.700h22.600v6.600H.7zM.7 16.700h22.600v6.600H.7z" fill="#117865" stroke="#111" strokeWidth="1.300" strokeDasharray="2 1.300" />
          </Ic>
        </div>
        <Ic w={23} h={23} className="ml-[40px]">
          <path d="M.7 20V9h5.500v12M6.200 20V.8h6.500V12M12.700 5.500h6V8" stroke="#605e5c" strokeWidth="1.300" />
          <path d="M10 15L20 6.500c1-1 2.500 0 1.500 1.500L13.500 18zM9.500 15.500c2 0 4 2 3.500 3.500s-4 3-9 2.500c4-.5 2-5 5.500-6z" fill="#f3f2f1" stroke={K} strokeWidth="1.200" />
        </Ic>
        <Ic w={25} h={25} className="ml-[41px]">
          <circle cx="10.500" cy="10.500" r="9.800" stroke={K} strokeWidth="1.300" />
          <path d="M5.500 18v-4h2v5M9.500 19v-7h2.500v7M14 18v-8h2.500v7" stroke={K} />
          <path d="M1 12l5-5 4 3 8-6" stroke={K} strokeWidth="1.200" />
          <path d="M17.500 17.500l6 6" stroke={K} strokeWidth="2.500" />
        </Ic>
      </div>
      <svg width="180" height="13" viewBox="0 0 180 13" fill="none" className="block shrink-0"><path d="M0 12.500h16l8-8 8 8h148" stroke="#8a8886" /></svg>
      <div className="grid h-[210px] shrink-0 auto-rows-[28px] grid-cols-[repeat(6,28px)] pl-[8px] pt-[10px]">
        {vizIcons.map((g, i) => (
          <div key={i} className={"flex h-6 w-6 items-center justify-center " + (i === 1 ? "border border-[#797775] bg-[#d2d0ce]" : "")}>
            <Ic w={18} h={18}>{g}</Ic>
          </div>
        ))}
      </div>
      <div className="flex min-h-0 grow border-t border-[#e1dfdd]">
        <div className="flex w-[174px] shrink-0 flex-col pl-1">
          <Well label="X-axis" lw={32} pill="Pregnancies" pw={64} chev="#1f6fb5" />
          <Well label="Y-axis" lw={31} pill="Sum of Age" pw={62} chev="#b0561a" />
          <T w={39} className="ml-2 mt-[6px] h-[25px] shrink-0 self-start text-[11.500px] leading-[22px]">Legend</T>
          <div className="flex h-[28px] shrink-0 items-center border border-dashed border-[#bebbb8] bg-white pl-[10px] text-[11.500px]"><T w={107}>Add data fields here</T></div>
          <T w={80} className="ml-2 mt-[7px] h-[25px] shrink-0 self-start text-[11.500px] leading-[22px]">Small multiples</T>
          <div className="h-4 shrink-0 border border-dashed border-[#bebbb8] bg-white" />
        </div>
        <div className="mt-[2px] h-[121px] w-[6px] rounded-full bg-[#c8c6c4]" />
      </div>
    </div>
  );
}

function PageTabs() {
  return (
    <div className="flex h-[35px] w-[1109px] shrink-0 bg-[#f3f2f1]">
      <div className="flex w-[39px] items-center gap-4 pl-[6px]">
        <Ic w={5} h={8}><path d="M5 0v8L0 4z" fill="#c8c6c4" /></Ic>
        <Ic w={5} h={8}><path d="M0 0v8l5-4z" fill="#c8c6c4" /></Ic>
      </div>
      <div className="flex w-[134px] flex-col border-x border-[#c8c6c4] bg-white">
        <div className="flex grow items-center justify-center pt-[5px] text-[11.500px]"><T w={92}>Diabetes Dataset</T></div>
        <div className="h-1 bg-[#117865]" />
      </div>
      <div className="mt-[2px] flex h-8 w-[39px] items-center justify-center bg-[#117865]">
        <Ic w={11} h={11}><path d="M5.500 0v11M0 5.500h11" stroke="#fff" strokeWidth="3" /></Ic>
      </div>
    </div>
  );
}

function StatusBar() {
  return (
    <div className="flex h-6 shrink-0 items-center border-t border-[#d8d6d4] text-[11.500px] text-[#484644]">
      <T w={59} className="ml-[5px]">Page 1 of 1</T>
      <div className="ml-[890px] h-[2px] w-1 bg-[#484644]" />
      <Ic x={962} y={709} w={100} h={14} className="ml-1"><path d="M962 716.500h100M1012.500 713.500v6" stroke="#605e5c" strokeWidth="1.200" /><path d="M988 711h4v11h-4z" fill="#605e5c" /></Ic>
      <Ic w={8} h={8} className="ml-[6px]"><path d="M4 .5v7M.5 4h7" stroke="#484644" strokeWidth="1.200" /></Ic>
      <T w={22} className="ml-[17px] text-[#605e5c]">60%</T>
      <Ic w={16} h={12} className="ml-5"><rect x=".5" y=".5" width="15" height="11" stroke="#605e5c" strokeWidth="1.200" /><path d="M5 3H3v2M11 3h2v2M5 9H3V7M11 9h2V7" stroke="#2b8a57" /></Ic>
      <T w={192} className="ml-[18px]">Update available (click to download)</T>
    </div>
  );
}

function Sq({ bg, bd, t }) {
  return (
    <svg width="22" height="22" viewBox="0 0 22 22" className="block">
      <rect x=".8" y=".8" width="20.400" height="20.400" fill={bg} stroke={bd} strokeWidth="1.500" />
      <text x="11" y="15" textAnchor="middle" fontSize="11" fontWeight="600" fill={bd} fontFamily="Open Sans">{t}</text>
    </svg>
  );
}

const apps = [
  { n: "start", i: <FaWindows size={17} color="#fff" /> },
  { n: "search", i: <Ic w={17} h={18} className="mr-[3px]"><circle cx="10.500" cy="6.500" r="5.500" stroke="#fff" strokeWidth="1.400" /><path d="M6.500 10.500L.8 17" stroke="#fff" strokeWidth="1.400" /></Ic> },
  { n: "chrome", on: 1, i: (
    <Ic w={26} h={26}>
      <circle cx="12" cy="12" r="12" fill="#fbc116" />
      <path d="M12 12L1.600 6a12 12 0 0 1 20.800 0z" fill="#e33b2e" />
      <path d="M12 12l1 12A12 12 0 0 1 1.600 6L7 15z" fill="#2da94f" />
      <circle cx="12" cy="12" r="5.600" fill="#fff" /><circle cx="12" cy="12" r="4.500" fill="#4285f4" />
      <circle cx="18.500" cy="19" r="7.500" fill="#c9b5b0" /><circle cx="18.500" cy="17" r="3" fill="#7b5648" /><path d="M13.500 24c0-5 10-5 10 0-3 3-7 3-10 0z" fill="#e8e8ee" />
    </Ic>
  ) },
  { n: "folder", on: 1, i: <Ic w={24} h={24}><path d="M1 2h9l2 3h11v18H1z" fill="#e8a921" /><path d="M1 7h22v15H1z" fill="#ffd869" /><path d="M5 23v-9h14v9h-4v-4H9v4z" fill="#3a96dd" /></Ic> },
  { n: "code", i: <VscVscode size={25} color="#1f9cf0" /> },
  { n: "postgres", i: (
    <span className="grid place-items-center">
      <Ic w={25} h={25} className="col-start-1 row-start-1"><path d="M2 5C4 1 9 2 11 2.500 14 1 21 0 23 5c1 4-1 9-3 11l3 1-5 2-.5 5h-5L12 18H6C3 15 1 9 2 5z" fill="#336791" /></Ic>
      <SiPostgresql size={25} color="#c3d5e4" className="col-start-1 row-start-1" />
    </span>
  ) },
  { n: "powerbi", on: 1, sel: "bg-[#6a6764]", wide: 1, i: <Ic w={20} h={26}><rect x="11" y="0" width="8" height="25" rx="1" fill="#d99a14" /><rect x="5" y="6" width="9" height="19" rx="1" fill="#efb92b" /><rect x="0" y="13" width="9" height="12" rx="1" fill="#fcdc58" /></Ic> },
  { n: "excel", i: <Ic w={25} h={24}><path d="M7 1h9v22H7z" fill="#1d9a5b" /><path d="M16 1h8v7h-8z" fill="#33c481" /><path d="M7 8h9v7H7z" fill="#107c41" /><path d="M16 8h8v7h-8z" fill="#21a366" /><path d="M7 15h17v8H7z" fill="#185c37" /><rect y="5" width="13" height="14" fill="#107c41" /><path d="M3.500 8.500l6 7.500M9.500 8.500l-6 7.500" stroke="#fff" strokeWidth="1.800" /></Ic> },
  { n: "edge", i: <Ic w={22} h={24}><path fillRule="evenodd" d="M1 11.500C2 4 6.500 .5 12 .5c6.500 0 9.500 5 9.500 10.500v3H7.500c.3 3.500 3.500 5 7 5 2.200 0 4.200-.6 6-1.600v4.700c-2 1-4.500 1.500-7 1.500C7 23.600 2.500 20 2.500 14c0-4 2.200-7 5.500-8.500C4.500 6.500 2 9 1 11.500zM7.500 10h7.500c0-3-1.300-4.500-3.500-4.500S8 7 7.500 10z" fill="#0a84e0" /></Ic> },
  { n: "firefox", i: <Ic w={24} h={24}><circle cx="12" cy="12.500" r="11" fill="#e55b17" /><circle cx="13" cy="9" r="8" fill="#234f9e" /><path d="M11 2c4-2 8 0 10 3-1 2-2 1-3 3s-4 1-4-1-3-2-3-5z" fill="#6fc0ee" /><path d="M2 3c0 3 2 4 4 4 3 1 5 1 5 3s-3 2-2.500 4.500S14 19 18 15c2-2 3-5 2.500-8.500 4 5 3.500 12-1.500 15.500S5 25 2 18 0 7 2 3z" fill="#f58a1c" /><path d="M20.500 4.500c4 5 3.500 12-1.500 16 2-5 2.500-10 1.500-16z" fill="#ffd24a" /><path d="M4 12c1 6 6 8 11 6-3 4-11 3-11-6z" fill="#e04e14" /></Ic> },
  { n: "ps", i: <Sq bg="#061e26" bd="#00c8ff" t="Ps" /> },
  { n: "lr", i: <Sq bg="#08202f" bd="#b4dcf0" t="Lr" /> },
  { n: "filmora", i: <Ic w={21} h={24}><rect width="21" height="24" rx="4" fill="#12243a" /><path d="M6.500 5L10 2l5 6-5.500 6L7 11l2.500-3z" fill="#50e3c2" /><path d="M0 17.500h21c0 4-2 5.500-5 5.500H5c-3 0-5-1.500-5-5.500z" fill="#fff" /><path d="M7.500 19h2.500v2H7.500zM11 19h2.500v2H11z" fill="#222" /></Ic> },
  { n: "notepad", on: 1, i: <Ic w={22} h={24}><path d="M7 2h14l-4 19.500H.5z" fill="#5b98a8" /><path d="M7 2h12l-5.500 17.500H1.500z" fill="#9fd0da" /><path d="M21 2.500l-4 19-3.500-2L19 3z" fill="#eef6f7" /><path d="M7 1.800h14" stroke="#dfe7ea" strokeWidth="2" /></Ic> },
  { n: "office", i: <Ic w={19} h={24}><path d="M0 5l11-4 7 2v18l-7 2-11-4 11 1V4L4 6v11l-4 2z" fill="#e64a19" /></Ic> },
  { n: "mail", i: <Ic w={24} h={22}><path d="M0 8L12 1l12 7v13H0z" fill="#fff" /><path d="M1 8h22l-9 6.500-4 .5z" fill="#333a3f" /><path d="M10 11l3 5 8-7z" fill="#333a3f" /></Ic> },
  { n: "calc", i: <Ic w={18} h={24}><rect width="18" height="24" fill="#fff" /><path d="M2.500 2.500h13v4h-13z" fill="#333a3f" />{[0, 1, 2, 3].map((r) => [0, 1, 2].map((c) => <rect key={r + "" + c} x={2.500 + c * 5} y={9 + r * 3.600} width="3" height="2" fill="#333a3f" />))}</Ic> },
  { n: "notes", i: <Ic w={18} h={19}><path d="M0 0h18v19H0z" fill="#ffe81a" /><path d="M9 11h9v8H9z" fill="#30343a" /><path d="M10.500 12.500h7l-7 6.500z" fill="#ffe81a" /></Ic> },
  { n: "sublime", i: <Ic w={24} h={24}><rect width="24" height="24" rx="3" fill="#4b4b4b" /><path d="M6 7l12-3v4l-6 2 6 2v5L6 20v-4l6-2-6-2z" fill="#ff9800" /></Ic> },
  { n: "xampp", i: <span className="flex h-6 w-6 items-center justify-center rounded-[4px] bg-[#fb7a24]"><SiXampp size={20} color="#fff" /></span> },
  { n: "ppt", on: 1, i: <Ic w={24} h={24}><circle cx="13" cy="12" r="11" fill="#ed6c47" /><path d="M13 1a11 11 0 0 1 11 11H13z" fill="#ff8f6b" /><path d="M13 12h11a11 11 0 0 1-11 11z" fill="#d35230" /><rect y="5" width="13" height="13" rx="1" fill="#c43e1c" /><path d="M4.500 15.500v-8h2.500c3.500 0 3.500 4.500 0 4.500H4.500" stroke="#fff" strokeWidth="1.600" /></Ic> },
  { n: "vlc", sel: "bg-[#b56a2d]", wide: 1, i: <Ic w={22} h={24}><path d="M3 18h16l3 5H0z" fill="#f58220" /><path d="M9.500 1h3L18 19c-3 2-11 2-14 0z" fill="#f58220" /><path d="M8 6.500h6l1 3.500c-2 1-6 1-8 0zM6 13h10l1 3c-2 1.500-10 1.500-12 0z" fill="#e9e9e9" /></Ic> },
];

function Taskbar() {
  return (
    <div className="flex h-10 shrink-0 bg-[linear-gradient(90deg,#403e3b_0%,#3e3e3c_24%,#2e3a3c_34%,#293a40_46%,#2b3646_62%,#363a3f_72%,#3f3d3b_100%)] text-white">
      {apps.map((a) => (
        <div key={a.n} className={"flex h-10 w-[49px] shrink-0 flex-col items-center"}>
          <div className={"flex h-[37.500px] items-center justify-center pt-[2px] " + (a.wide ? "w-[48px] " : "w-10 ") + (a.sel || "")}>{a.i}</div>
          <div className={"h-[2.500px] " + (a.wide ? "w-[48px] " : "w-10 ") + (a.n === "vlc" ? "bg-[#ff7a00]" : a.on ? "bg-[#76b9ed]" : "")} />
        </div>
      ))}
      <div className="flex grow items-center pl-[21px] pt-px">
        <Ic w={12} h={7}><path d="M.7 6.300L6 1l5.300 5.300" stroke="#fff" strokeWidth="1.300" /></Ic>
        <Ic w={17} h={16} className="ml-[10px]"><path d="M3 11c-4-1-3-6 1-6 1-4 8-4 9 1 4 1 3 5 0 5z" fill="#c8c8c8" /><circle cx="11.500" cy="11" r="5" fill="#e81123" /><path d="M9 11h5" stroke="#fff" strokeWidth="1.500" /></Ic>
        <Ic w={13} h={14} className="ml-[9px]"><path d="M1 11C1 5 6 1 12 1M4 12c0-5 3-8 8-8M7 13c0-3 2-5.500 5-5.500" stroke="#d0d0d0" strokeWidth="1.200" /><circle cx="11" cy="12" r="1.500" fill="#fff" /></Ic>
        <Ic w={16} h={14} className="ml-[9px]"><path d="M13 5V1.500H1v8h6M3 3.500v4" stroke="#e8e8e8" strokeWidth="1.200" /><circle cx="11" cy="9" r="4.500" fill="#10893e" /><path d="M9 10.500l3-4.500c2 2 0 5-3 4.500z" fill="#fff" /></Ic>
        <Ic w={17} h={14} className="ml-2"><path d="M1 5h2.500L7 1.500v11L3.500 9H1zM9.500 5c1 1 1 3 0 4M11.500 3c2.500 2 2.500 6 0 8M14 1c3.500 3 3.500 9 0 12" stroke="#f0f0f0" strokeWidth="1.100" /></Ic>
        <T w={23} className="ml-[9px] text-[11px]">ENG</T>
        <div className="ml-3 flex w-[53px] flex-col items-center pb-[3px] text-[11.300px] leading-[19px]"><T w={43}>7:13 AM</T><T w={52}>10/4/2023</T></div>
        <Ic w={25} h={25} className="ml-[17px]">
          <path d="M1 1h16v13H7l-3 4v-4H1z" fill="#fff" /><path d="M3.500 4.500h11M3.500 7.500h11M3.500 10.500h8" stroke="#444" />
          <circle cx="16" cy="17" r="7.800" fill="#333" stroke="#a8a8a8" strokeWidth="1.100" />
          <text x="16" y="21.500" textAnchor="middle" fontSize="12" fill="#fff" fontFamily="Open Sans">7</text>
        </Ic>
        <div className="ml-[12px] h-10 w-px bg-[#6b6b6b]" />
      </div>
    </div>
  );
}

export default function App() {
  return (
    <div className="flex h-[768px] w-[1366px] flex-col overflow-hidden bg-[#f3f2f1] font-['Open_Sans','Noto_Sans',sans-serif] text-[#252423]">
      <TitleBar />
      <Tabs />
      <Ribbon />
      <div className="flex h-[544px] shrink-0">
        <Rail />
        <div className="flex w-[1109px] shrink-0 flex-col">
          <div className="flex">
            <Canvas />
            <Filters />
          </div>
          <PageTabs />
        </div>
        <Viz />
        <div className="flex w-[34px] flex-col items-center pt-[13px]">
          <Arrows left />
          <div className="mr-1 mt-[15px] text-[14px] font-semibold leading-[18px] [writing-mode:vertical-rl]">Data</div>
        </div>
      </div>
      <StatusBar />
      <Taskbar />
    </div>
  );
}
